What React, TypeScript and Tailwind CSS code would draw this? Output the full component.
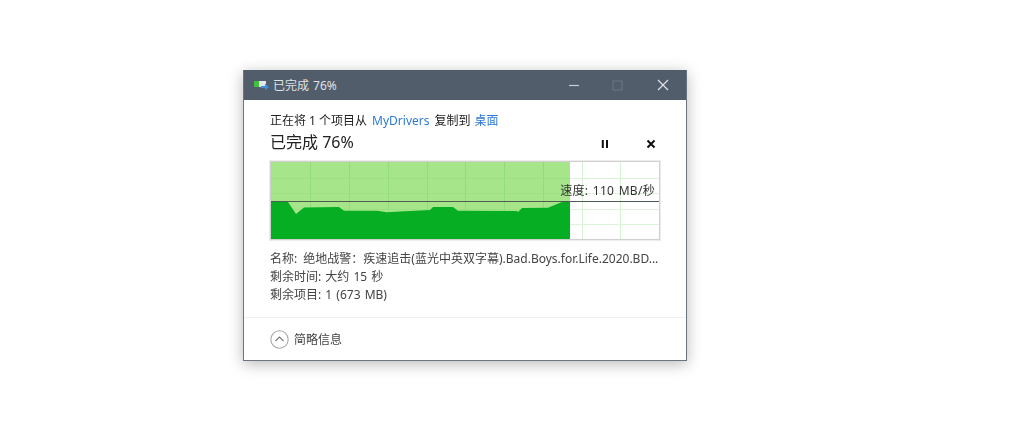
import React from 'react';

const font = '"Noto Sans", "Noto Sans CJK SC", sans-serif';

const Graph = () => {
  const vLines = [39, 78, 117, 156, 194, 233, 272, 311, 349];
  const hLines = [16, 31, 47, 62];
  // traced from the reference graph, 388x77 box
  const points =
    '0,77 0,40 17,40 25,52 33,45.5 68,45 73,48.7 106,48.7 116,50.3 129,49.5 159,48 162,45 182,45 187,48.7 246,49 247,50 251,46 277,45.7 291,40 299,40 299,77';
  return (
    <svg width="388" height="77" viewBox="0 0 388 77" className="block">
      <rect x="0" y="0" width="299" height="77" fill="#a7e58b" />
      {vLines.map((x) => (
        <line key={x} x1={x + 0.5} y1="0" x2={x + 0.5} y2="77" stroke={x < 299 ? '#92dc7c' : '#d3f2cf'} />
      ))}
      {hLines.map((y) => (
        <g key={y}>
          <line x1="0" y1={y + 0.5} x2="299" y2={y + 0.5} stroke="#9be083" />
          <line x1="299" y1={y + 0.5} x2="388" y2={y + 0.5} stroke="#dcf5d8" />
        </g>
      ))}
      <polygon fill="#06ae23" points={points} />
      <line x1="0" y1="39.5" x2="388" y2="39.5" stroke="#4f5a50" strokeWidth="1.2" />
    </svg>
  );
};

export default function App() {
  return (
    <div className="h-[421px] w-[1026px] overflow-hidden bg-white pl-[243px] pt-[70px]" style={{ fontFamily: font }}>
      <div className="flex h-[291px] w-[444px] flex-col border-x border-b border-[#6b7480] bg-white shadow-[0_3px_14px_rgba(0,0,0,0.28)] blur-[0.4px]">
        <div className="flex h-[30px] shrink-0 items-center bg-[#525d6b] pl-[10px] text-white">
          <svg width="15" height="11" viewBox="0 0 15 11" className="shrink-0">
            <rect x="0" y="1" width="12" height="6" fill="#e4e8ec" />
            <rect x="0" y="1" width="5" height="6" fill="#3ec23c" />
            <path d="M7 6 H11 V3.5 L15 7 L11 10.5 V8 H7 Z" fill="#3d8fe0" />
          </svg>
          <span className="ml-[4px] mt-[2px] text-[12px] text-[#dfe3e7] [word-spacing:1px]">已完成 76%</span>
          <div className="ml-auto flex items-center">
            <svg width="12" height="12" viewBox="0 0 12 12" className="mr-[32px]">
              <line x1="1" y1="6.5" x2="11" y2="6.5" stroke="#c9ced4" strokeWidth="1.2" />
            </svg>
            <svg width="11" height="11" viewBox="0 0 11 11" className="mr-[34px]">
              <rect x="1" y="1" width="9" height="9" fill="none" stroke="#6d7785" strokeWidth="1" />
            </svg>
            <svg width="12" height="12" viewBox="0 0 12 12" className="mr-[17px]">
              <path d="M1 1 L11 11 M11 1 L1 11" stroke="#dfe3e7" strokeWidth="1.2" />
            </svg>
          </div>
        </div>

        <div className="flex flex-1 flex-col pl-[26px] pr-[27px]">
          <div className="mt-[12px] flex h-[17px] items-center whitespace-pre text-[12px] text-[#222]">
            正在将 1 个项目从
            <span className="mx-[5px] text-[#2e7bd6]">MyDrivers</span>
            复制到
            <span className="ml-[4px] text-[#2e7bd6]">桌面</span>
          </div>
          <div className="flex h-[24px] items-center">
            <span className="mt-[2px] text-[16px] text-[#222]">已完成 76%</span>
            <svg width="10" height="10" viewBox="0 0 10 10" className="ml-auto mr-[36px] mt-[6px]">
              <path d="M2.8 1 V9 M7 1 V9" stroke="#111" strokeWidth="2" />
            </svg>
            <svg width="10" height="10" viewBox="0 0 10 10" className="mr-[3px] mt-[6px]">
              <path d="M1.5 1.5 L8.5 8.5 M8.5 1.5 L1.5 8.5" stroke="#111" strokeWidth="2" />
            </svg>
          </div>
          <div className="relative mt-[8px] h-[79px] w-[390px] border border-[#d0d0d0] shadow-[0_0_0_1px_#ececec]">
            <Graph />
            <span className="absolute right-[4px] top-[21px] whitespace-nowrap text-[12px] leading-[16px] tracking-[0.3px] text-[#333] [word-spacing:1px]">速度: 110 MB/秒</span>
          </div>
          <div className="mt-[10px] flex flex-col text-[12px] leading-[18px] text-[#444] [word-spacing:1px]">
            <span className="whitespace-nowrap [word-spacing:3px]">名称: 绝地战警：疾速追击(蓝光中英双字幕).Bad.Boys.for.Life.2020.BD...</span>
            <span>剩余时间: 大约 15 秒</span>
            <span>剩余项目: 1 (673 MB)</span>
          </div>
        </div>

        <div className="flex h-[43px] shrink-0 items-center border-t border-[#f0f0f0] pl-[26px]">
          <svg width="19" height="19" viewBox="0 0 19 19">
            <circle cx="9.5" cy="9.5" r="8.7" fill="none" stroke="#a8a8a8" strokeWidth="1.1" />
            <path d="M5.5 11 L9.5 7 L13.5 11" fill="none" stroke="#777" strokeWidth="1.1" />
          </svg>
          <span className="ml-[5px] mt-[2px] text-[12px] text-[#444]">简略信息</span>
        </div>
      </div>
    </div>
  );
}
